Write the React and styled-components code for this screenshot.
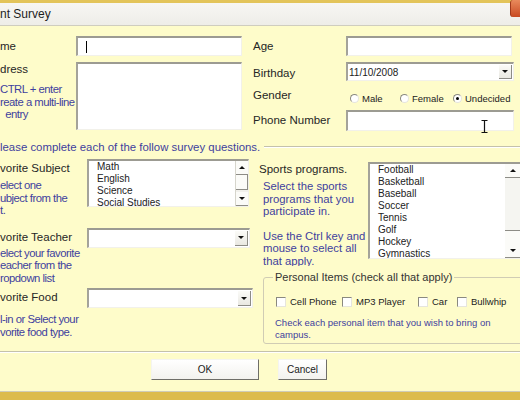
import styled, { createGlobalStyle } from "styled-components"

const Global = createGlobalStyle`
    html, body {
        margin: 0;
        padding: 0;
        overflow: hidden;
        background: #fefcca;
    }
    #root {
        width: 520px;
        height: 400px;
        overflow: hidden;
    }
`

const font = `"Liberation Sans", Arial, sans-serif`

export default function App() {
    return (
        <>
            <Global />
            <Window>
                <Header>
                    <Title>nt Survey</Title>
                    <CloseButton />
                </Header>
                <Body>
                    <TopSection>
                        <TopLeft>
                            <Row>
                                <Label w={76}>me</Label>
                                <TextBox w={166} h={20}><Caret /></TextBox>
                            </Row>
                            <Row>
                                <LabelStack w={76}>
                                    <Label pt={0}>dress</Label>
                                    <Help mt={7} tight>CTRL + enter<br />reate a multi-line<br />&nbsp;&nbsp;entry</Help>
                                </LabelStack>
                                <TextBox w={166} h={68} />
                            </Row>
                        </TopLeft>
                        <TopRight>
                            <Row>
                                <Label w={93}>Age</Label>
                                <TextBox w={166} h={20} />
                            </Row>
                            <Row>
                                <Label w={93} pt={4}>Birthday</Label>
                                <Combo w={168} h={19}>
                                    <ComboText>11/10/2008</ComboText>
                                    <DropButton><Arrow /></DropButton>
                                </Combo>
                            </Row>
                            <Row>
                                <Label w={93} pt={1}>Gender</Label>
                                <Radios>
                                    <RadioItem w={50}><Radio />Male</RadioItem>
                                    <RadioItem w={53}><Radio />Female</RadioItem>
                                    <RadioItem><Radio checked />Undecided</RadioItem>
                                </Radios>
                            </Row>
                            <Row>
                                <Label w={93} pt={3}>Phone Number</Label>
                                <TextBox w={168} h={21}>
                                    <IBeam viewBox="0 0 7 13" width="7" height="13">
                                        <path d="M0.5 0.5h6M3.5 0.5v12M0.5 12.5h6" stroke="#111" strokeWidth="1.2" fill="none" />
                                    </IBeam>
                                </TextBox>
                            </Row>
                        </TopRight>
                    </TopSection>

                    <CaptionRow>
                        <Caption>lease complete each of the follow survey questions.</Caption>
                        <Rule />
                    </CaptionRow>

                    <Middle>
                        <MidLeft>
                            <Block mt={6}>
                                <LabelStack w={87}>
                                    <Label pt={2}>vorite Subject</Label>
                                    <Help mt={4} tight>elect one<br />ubject from the<br />t.</Help>
                                </LabelStack>
                                <ListBox w={162} h={48}>
                                    <ListItems>
                                        <li>Math</li>
                                        <li>English</li>
                                        <li>Science</li>
                                        <li>Social Studies</li>
                                    </ListItems>
                                    <ScrollBar w={12}>
                                        <ScrollBtn><UpArrow /></ScrollBtn>
                                        <Thumb h={14} />
                                        <Track />
                                        <ScrollBtn><Arrow /></ScrollBtn>
                                    </ScrollBar>
                                </ListBox>
                            </Block>
                            <Block mt={11}>
                                <LabelStack w={87}>
                                    <Label pt={2}>vorite Teacher</Label>
                                    <Help mt={3} tight>elect your favorite<br />eacher from the<br />ropdown list</Help>
                                </LabelStack>
                                <Combo w={163} h={20}>
                                    <ComboText />
                                    <DropButton><Arrow /></DropButton>
                                </Combo>
                            </Block>
                            <Block mt={4}>
                                <LabelStack w={87}>
                                    <Label pt={2}>vorite Food</Label>
                                    <Help mt={9} tight>l-in or Select your<br />vorite food type.</Help>
                                </LabelStack>
                                <Combo w={166} h={20}>
                                    <ComboText />
                                    <DropButton><Arrow /></DropButton>
                                </Combo>
                            </Block>
                        </MidLeft>

                        <MidRight>
                            <Block mt={9}>
                                <LabelStack w={109}>
                                    <Label pt={0}>Sports programs.</Label>
                                    <Help mt={4} ml={4}>Select the sports<br />programs that you<br />participate in.</Help>
                                    <Help mt={12} ml={4} clip>Use the Ctrl key and<br />mouse to select all<br />that apply.</Help>
                                </LabelStack>
                                <ListBox w={154} h={97}>
                                    <ListItems>
                                        <li>Football</li>
                                        <li>Basketball</li>
                                        <li>Baseball</li>
                                        <li>Soccer</li>
                                        <li>Tennis</li>
                                        <li>Golf</li>
                                        <li>Hockey</li>
                                        <li>Gymnastics</li>
                                    </ListItems>
                                    <ScrollBar w={16} flat>
                                        <ScrollBtn><UpArrow /></ScrollBtn>
                                        <Thumb h={52} flat />
                                        <Track />
                                        <ScrollBtn><Arrow /></ScrollBtn>
                                    </ScrollBar>
                                </ListBox>
                            </Block>
                            <Group>
                                <legend>Personal Items (check all that apply)</legend>
                                <Checks>
                                    <CheckItem w={66}><CheckBox />Cell Phone</CheckItem>
                                    <CheckItem w={76}><CheckBox />MP3 Player</CheckItem>
                                    <CheckItem w={39}><CheckBox />Car</CheckItem>
                                    <CheckItem><CheckBox />Bullwhip</CheckItem>
                                </Checks>
                                <SmallHelp>Check each personal item that you wish to bring on<br />campus.</SmallHelp>
                            </Group>
                        </MidRight>
                    </Middle>

                    <Separator />

                    <Buttons>
                        <Button w={108}>OK</Button>
                        <Button w={49}>Cancel</Button>
                    </Buttons>
                </Body>
                <Footer />
            </Window>
        </>
    )
}

const Window = styled.div`
    width: 520px;
    height: 400px;
    display: flex;
    flex-direction: column;
    font-family: ${font};
    background: #fefcca;
`

const Header = styled.div`
    position: relative;
    height: 22px;
    border-top: 3px solid #e3c45a;
    border-bottom: 1px solid #cfcdbf;
    background: linear-gradient(#f7f6f3, #eeede8);
    display: flex;
    align-items: center;
`

const Title = styled.div`
    font-size: 12px;
    color: #1e1e1e;
    margin-top: -1px;
`

const CloseButton = styled.div`
    position: absolute;
    right: 0;
    top: -3px;
    width: 9px;
    height: 17px;
    border-radius: 3px 0 0 3px;
    background: linear-gradient(#e98a5c, #c84a22);
    border-left: 1px solid #a03a1c;
`

const Body = styled.div`
    display: flex;
    flex-direction: column;
    flex: 1;
`

const TopSection = styled.div`
    display: flex;
    padding-top: 10px;
`

const TopLeft = styled.div`
    width: 253px;
    display: flex;
    flex-direction: column;
    gap: 6px;
`

const TopRight = styled.div`
    display: flex;
    flex-direction: column;
    gap: 6px;
`

const Row = styled.div`
    display: flex;
    align-items: flex-start;
`

const LabelStack = styled.div`
    width: ${p => p.w}px;
    flex-shrink: 0;
    display: flex;
    flex-direction: column;
`

const Label = styled.div`
    ${p => p.w ? `width: ${p.w}px;` : ""}
    flex-shrink: 0;
    padding-top: ${p => p.pt ?? 3}px;
    font-size: 11.5px;
    line-height: 14px;
    color: #262626;
    white-space: nowrap;
`

const Help = styled.div`
    margin-top: ${p => p.mt}px;
    margin-left: ${p => p.ml || 0}px;
    font-size: 11.3px;
    line-height: 12.5px;
    color: #3f3f9e;
    white-space: nowrap;
    letter-spacing: ${p => p.tight ? "-0.5px" : "0"};
    ${p => p.clip ? "height: 36px; overflow: hidden;" : ""}
`

const TextBox = styled.div`
    position: relative;
    box-sizing: border-box;
    width: ${p => p.w}px;
    height: ${p => p.h}px;
    background: #ffffff;
    border-top: 2px solid #9c9b92;
    border-left: 2px solid #a4a39a;
    border-right: 1px solid #f2f1ea;
    border-bottom: 1px solid #f2f1ea;
    display: flex;
    align-items: center;
`

const Caret = styled.span`
    width: 1px;
    height: 12px;
    margin-left: 8px;
    background: #000;
`

const IBeam = styled.svg`
    position: absolute;
    left: 133px;
    top: 8px;
`

const Combo = styled(TextBox)`
    justify-content: space-between;
    align-items: stretch;
`

const ComboText = styled.div`
    font-size: 10px;
    color: #222;
    padding-left: 1px;
    display: flex;
    align-items: center;
`

const DropButton = styled.div`
    width: 12px;
    margin: 1px 1px 1px 0;
    background: linear-gradient(#fbfbf8, #e9e8e2);
    border-right: 1px solid #8d8c86;
    border-bottom: 1px solid #8d8c86;
    display: flex;
    align-items: center;
    justify-content: center;
`

const Arrow = styled.span`
    width: 0;
    height: 0;
    border-left: 3px solid transparent;
    border-right: 3px solid transparent;
    border-top: 3px solid #111;
`

const UpArrow = styled(Arrow)`
    border-top: none;
    border-bottom: 3px solid #111;
`

const Radios = styled.div`
    display: flex;
    align-items: center;
    margin: 6px 0 0 4px;
`

const RadioItem = styled.label`
    ${p => p.w ? `width: ${p.w}px;` : ""}
    display: flex;
    align-items: center;
    gap: 3px;
    font-size: 9.5px;
    color: #222;
    white-space: nowrap;
`

const Radio = styled.span`
    box-sizing: border-box;
    width: 9px;
    height: 9px;
    border-radius: 50%;
    background: #fff;
    border: 1px solid;
    border-color: #8a897f #e6e5dd #e6e5dd #8a897f;
    display: flex;
    align-items: center;
    justify-content: center;
    &::after {
        content: "";
        width: 3px;
        height: 3px;
        border-radius: 50%;
        background: ${p => p.checked ? "#000" : "transparent"};
    }
`

const CaptionRow = styled.div`
    display: flex;
    align-items: center;
    margin-top: 9px;
    height: 13px;
`

const Caption = styled.div`
    font-size: 11.4px;
    color: #3f3f9e;
    white-space: nowrap;
    padding-right: 4px;
`

const Rule = styled.div`
    flex: 1;
    height: 0;
    border-top: 1px solid #c4c1ab;
    border-bottom: 1px solid #ffffff;
`

const Middle = styled.div`
    display: flex;
    height: 198px;
`

const MidLeft = styled.div`
    width: 259px;
    flex-shrink: 0;
    display: flex;
    flex-direction: column;
`

const MidRight = styled.div`
    display: flex;
    flex-direction: column;
`

const Block = styled.div`
    display: flex;
    align-items: flex-start;
    margin-top: ${p => p.mt}px;
`

const ListBox = styled(TextBox)`
    align-items: stretch;
    overflow: hidden;
    flex-shrink: 0;
`

const ListItems = styled.ul`
    list-style: none;
    margin: 0;
    padding: 0 0 0 8px;
    flex: 1;
    font-size: 10px;
    line-height: 12px;
    color: #222;
    white-space: nowrap;
`

const ScrollBar = styled.div`
    width: ${p => p.w}px;
    flex-shrink: 0;
    display: flex;
    flex-direction: column;
    background: ${p => p.flat ? "#fbfbf8" : "#f1f0eb"};
    border-left: ${p => p.flat ? "none" : "1px solid #d6d5cc"};
`

const ScrollBtn = styled.div`
    height: 13px;
    display: flex;
    align-items: center;
    justify-content: center;
    background: #fbfbf8;
    border-bottom: 1px solid #8d8c86;
`

const Thumb = styled.div`
    height: ${p => p.h}px;
    background: ${p => p.flat ? "#f5f5f1" : "#fbfbf8"};
    border-bottom: 1px solid #8d8c86;
    border-right: ${p => p.flat ? "none" : "1px solid #8d8c86"};
`

const Track = styled.div`
    flex: 1;
`

const Group = styled.fieldset`
    box-sizing: border-box;
    width: 270px;
    margin: 5px 0 0 4px;
    padding: 0 0 2px 9px;
    border: 1px solid #d0ccb4;
    border-radius: 3px;
    legend {
        padding: 0 2px;
        font-size: 11px;
        line-height: 13px;
        color: #333;
        font-family: ${font};
    }
`

const Checks = styled.div`
    display: flex;
    align-items: center;
    margin: 11px 0 0 3px;
    height: 14px;
`

const CheckItem = styled.label`
    ${p => p.w ? `width: ${p.w}px;` : ""}
    display: flex;
    align-items: center;
    gap: 4px;
    font-size: 9.5px;
    color: #222;
    white-space: nowrap;
`

const CheckBox = styled.span`
    box-sizing: border-box;
    width: 10px;
    height: 10px;
    background: #fff;
    border: 1px solid;
    border-color: #8a897f #e6e5dd #e6e5dd #8a897f;
`

const SmallHelp = styled.div`
    margin: 8px 0 0 2px;
    font-size: 9.5px;
    line-height: 12px;
    color: #3f3f9e;
    white-space: nowrap;
`

const Separator = styled.div`
    height: 0;
    border-top: 1px solid #c4c1ab;
    border-bottom: 1px solid #ffffff;
`

const Buttons = styled.div`
    display: flex;
    gap: 19px;
    margin: 6px 0 0 151px;
`

const Button = styled.button`
    box-sizing: border-box;
    width: ${p => p.w}px;
    height: 21px;
    padding: 0;
    font-family: ${font};
    font-size: 10px;
    color: #222;
    background: linear-gradient(#ffffff, #f3f2ee);
    border: none;
    border-top: 1px solid #f4f4f0;
    border-left: 1px solid #f4f4f0;
    border-right: 1px solid #6f6e68;
    border-bottom: 1px solid #6f6e68;
`

const Footer = styled.div`
    height: 8px;
    margin-top: auto;
    border-top: 1px solid #cfccb8;
    background: #dcbb4c;
`
